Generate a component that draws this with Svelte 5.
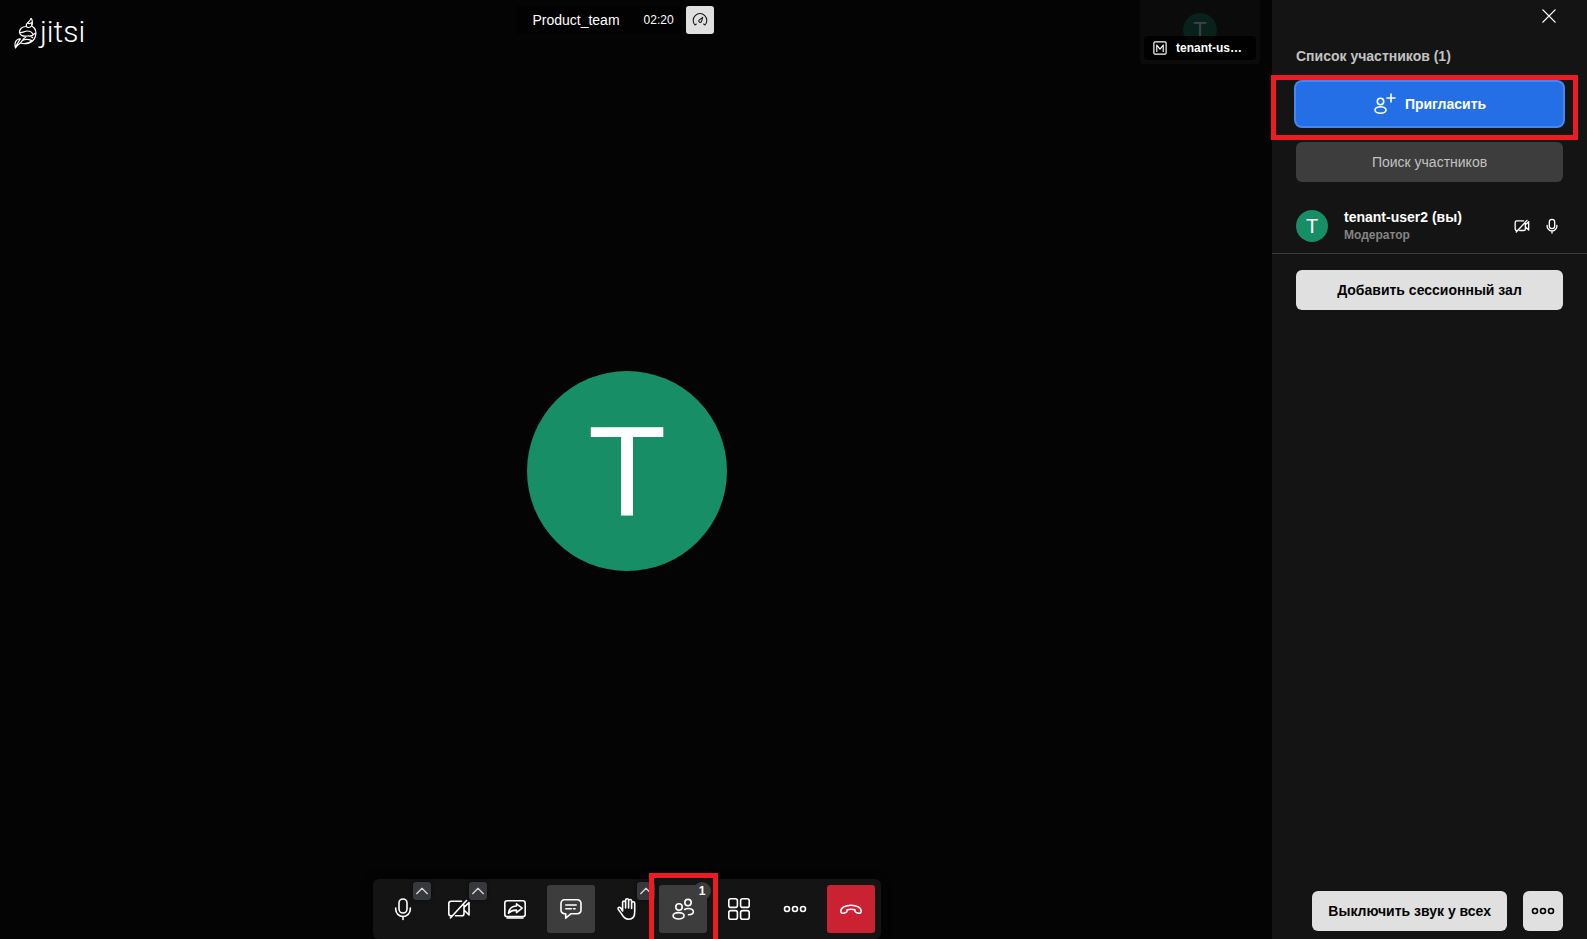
<script lang="ts">
  let search: string = '';
  let participants = [{ name: 'tenant-user2', role: 'Модератор', self: true }];

  const tools = [
    { id: 'mic', label: 'Микрофон', arrow: true },
    { id: 'camera-off', label: 'Камера', arrow: true },
    { id: 'share', label: 'Демонстрация экрана' },
    { id: 'chat', label: 'Чат', active: true },
    { id: 'hand', label: 'Поднять руку', arrow: true },
    { id: 'people', label: 'Участники', active: true, marked: true },
    { id: 'tiles', label: 'Плитка' },
    { id: 'dots', label: 'Ещё' },
    { id: 'hangup', label: 'Завершить', danger: true }
  ];
</script>

<svelte:head>
  <title>Product_team</title>
</svelte:head>

{#snippet icon(id, size = 24)}
  <svg class="icon" width={size} height={size} viewBox="0 0 24 24" aria-hidden="true">
    {#if id === 'mic'}
      <rect x="8" y="2" width="8" height="14" rx="4" />
      <path d="M4.7 11v1.2a7.3 7.3 0 0 0 14.6 0V11M12 19.5v3" />
    {:else if id === 'camera-off'}
      <path d="M14.5 4.2H4.2c-1.4 0-2.4 1-2.4 2.4v9.8c0 1.4 1 2.4 2.4 2.4h.6M19.5 3.5 3.4 21M8.5 18.8h6.2c1.4 0 2.3-1 2.3-2.4V8.2M17 13l5 5V5.5l-4 3.8" />
    {:else if id === 'share'}
      <rect x="1.8" y="3.8" width="20.4" height="15.8" rx="2.4" />
      <path d="M4 21h16" />
      <path d="M13.5 9V6.8l5.7 4.3-5.7 4.5v-2.5c-3.800-.2-5.900.9-8 3.100.5-4.200 3.400-6.900 8-7.200z" />
    {:else if id === 'chat'}
      <path d="M5.500 2.800h13a3.500 3.500 0 0 1 3.500 3.500v6.900a3.500 3.500 0 0 1-3.500 3.500H12l-5.300 4.500v-4.500H5.500A3.500 3.500 0 0 1 2 13.200V6.300a3.500 3.500 0 0 1 3.500-3.500z" />
      <path d="M6.800 8h10.400M6.800 11.700h5.500M14.500 11.700h1.600" />
    {:else if id === 'hand'}
      <path d="M7.600 14V5.500a1.500 1.500 0 0 1 3 0V11 3.200a1.500 1.500 0 0 1 3 0V11 4a1.500 1.500 0 0 1 3 0v7.500V6.300a1.500 1.500 0 0 1 3.100 0V15c0 4.500-2.200 7.200-6 7.200-3.400 0-5.200-1.900-6.800-4.800l-3.800-5.300c-.5-1.400 1.300-2.500 2.500-1.200z" />
    {:else if id === 'people'}
      <circle cx="8" cy="10" r="3.200" />
      <ellipse cx="7.600" cy="18.800" rx="5.500" ry="3.200" />
      <circle cx="17" cy="5.600" r="3.200" />
      <path d="M13.700 12.500c1-.7 2.100-1 3.400-1 3.200 0 5.300 1.600 5.300 3.300 0 1.600-1.900 2.900-4.900 3" />
    {:else if id === 'tiles'}
      <rect x="1.800" y="1.800" width="8.600" height="8.600" rx="2" />
      <rect x="13.600" y="1.800" width="8.600" height="8.600" rx="2" />
      <rect x="1.800" y="13.600" width="8.600" height="8.600" rx="2" />
      <rect x="13.600" y="13.600" width="8.600" height="8.600" rx="2" />
    {:else if id === 'dots'}
      <circle cx="4" cy="12" r="2.500" />
      <circle cx="12" cy="12" r="2.500" />
      <circle cx="20" cy="12" r="2.500" />
    {:else if id === 'hangup'}
      <path d="M6.800 15.500c.9-.3 1.300-.9 1.300-1.700v-1c2.600-.7 5.200-.7 7.800 0v1c0 .8.400 1.400 1.300 1.700l2.400.7c1.500.4 2.600-.6 2.600-2 0-3.500-4.500-6-10.200-6S1.800 10.700 1.800 14.200c0 1.400 1.100 2.400 2.600 2z" />
    {:else if id === 'gauge'}
      <path d="M4.500 19.500a10.200 10.200 0 1 1 15 0l-2-1.500M4.500 19.500l2-1.500" />
      <path d="M16 8l-1.600 6a2.200 2.200 0 0 1-4.200-1.500z" />
    {:else if id === 'invite'}
      <circle cx="7.500" cy="9.500" r="3.200" />
      <ellipse cx="7.500" cy="18" rx="5.500" ry="3.300" />
      <path d="M18 2v8M14 6h8" />
    {:else if id === 'close'}
      <path d="M1.500 1.500l21 21M22.500 1.500l-21 21" />
    {:else if id === 'up'}
      <path d="M4 16l8-8 8 8" />
    {:else if id === 'moderator'}
      <rect x="1.500" y="1.500" width="21" height="21" rx="2" />
      <path d="M6.500 18V7l5.500 7 5.500-7v11" />
    {/if}
  </svg>
{/snippet}

<div class="conference">
  <main class="video-space">
    <header class="top">
      <a class="logo" href="#home" aria-label="jitsi">
        <svg class="watermark" width="24" height="32" viewBox="0 0 24 32" aria-hidden="true">
          <path d="M17 1c-.5 3-2 3.500-3.500 5M17 1c1.500 2 1.500 5 .5 7" />
          <path d="M13.500 6c-2 1.500-1.500 4.500 1 4.500 2.800 0 4.500-2.500 3.500-5-1.500 1-3 1.500-4.500.5z" />
          <path d="M12.500 9.500c-4 0-7 2-7 6 2.500 1 5-1.500 8-1.500 2.500 0 4.500 1 5.500 3.500M18 9c3.500 2.500 4.500 6.500 3.500 10-.8 3.500-3.500 6-7.500 7.500" />
          <path d="M5.500 15.500c1 3.500 5 4 8 3.500 2.500-.4 4 .3 5.500 2M21.500 16c-2 2-3.500 3-6 3" />
          <path d="M18 23.500c-3 3-7 4-11.500 2.500 2-4 6-4.500 11.500-2.500zM8 24c1-2 2-3 4-4" />
          <path d="M6.500 21.500C2 22 0 25.500 1.500 31c1-2.500 3-3.500 5-5M6.500 21.500c-1 2-3 4-5 9" />
        </svg>
        <span>jitsi</span>
      </a>
      <div class="subject">
        <span class="room">Product_team</span>
        <span class="timer">02:20</span>
        <button class="quality" aria-label="Производительность">{@render icon('gauge', 16)}</button>
      </div>
      <div class="thumbnail">
        <div class="thumb-avatar">T</div>
        <div class="thumb-label">
          {@render icon('moderator', 14)}
          <span>tenant-us…</span>
        </div>
      </div>
    </header>

    <section class="stage">
      <div class="avatar-large">T</div>
    </section>

    <div class="toolbox">
      <div class="toolbar" role="toolbar">
        {#each tools as tool}
          <div class="tool">
            <button
              class="tool-button"
              class:active={tool.active}
              class:danger={tool.danger}
              aria-label={tool.label}
            >
              {@render icon(tool.id)}
            </button>
            {#if tool.arrow}
              <button class="arrow" aria-label="Настройки: {tool.label}">{@render icon('up', 16)}</button>
            {/if}
            {#if tool.marked}
              <span class="count">{participants.length}</span>
              <span class="mark mark-tool"></span>
            {/if}
          </div>
        {/each}
      </div>
    </div>
  </main>

  <aside class="pane">
    <div class="pane-header">
      <button class="close" aria-label="Закрыть">{@render icon('close', 14)}</button>
    </div>
    <h2>Список участников ({participants.length})</h2>
    <div class="invite-wrap">
      <button class="invite">{@render icon('invite')}Пригласить</button>
      <span class="mark mark-invite"></span>
    </div>
    <input
      class="search"
      type="text"
      placeholder="Поиск участников"
      aria-label="Поиск участников"
      bind:value={search}
    />
    {#each participants as participant}
      <div class="participant">
        <div class="avatar-small">T</div>
        <div class="info">
          <div class="name">{participant.name} {participant.self ? '(вы)' : ''}</div>
          <div class="role">{participant.role}</div>
        </div>
        <div class="states">
          {@render icon('camera-off', 16)}
          {@render icon('mic', 16)}
        </div>
      </div>
    {/each}
    <button class="secondary">Добавить сессионный зал</button>
    <footer>
      <button class="secondary">Выключить звук у всех</button>
      <button class="secondary more" aria-label="Ещё">{@render icon('dots')}</button>
    </footer>
  </aside>
</div>

<style>
  :global(body) {
    background: #040404;
  }

  .conference {
    display: flex;
    min-height: 100vh;
    color: #fff;
    font-family: 'Liberation Sans', Arial, sans-serif;
    font-size: 14px;
    line-height: 20px;
  }

  button,
  input {
    margin: 0;
    padding: 0;
    border: 0;
    font: inherit;
    color: inherit;
  }

  button {
    display: flex;
    align-items: center;
    justify-content: center;
    background: none;
    cursor: pointer;
  }

  .icon {
    display: block;
    flex-shrink: 0;
    fill: none;
    stroke: currentColor;
    stroke-width: 1.6;
    stroke-linecap: round;
    stroke-linejoin: round;
  }

  .video-space {
    flex: 1;
    display: flex;
    flex-direction: column;
    min-width: 0;
    background: #040404;
  }

  .top {
    display: grid;
    grid-template-columns: 1fr auto 1fr;
    align-items: start;
    height: 63px;
  }

  .logo {
    display: flex;
    align-items: center;
    gap: 2px;
    padding: 17px 0 0 14px;
    color: #fff;
    text-decoration: none;
    font-family: Roboto, 'Open Sans', sans-serif;
    font-size: 30px;
    font-weight: 300;
    line-height: 32px;
  }

  .logo span {
    margin-top: -2px;
  }

  .watermark {
    fill: none;
    stroke: #fff;
    stroke-width: 1.2;
    stroke-linejoin: round;
  }

  .subject {
    display: flex;
    align-items: center;
    padding: 6px 42px 0 0;
    line-height: 28px;
  }

  .room {
    padding: 0 16px;
    background: #020202;
    border-radius: 3px 0 0 3px;
  }

  .timer {
    padding: 0 8px;
    margin-right: 4px;
    background: #020202;
    border-radius: 0 3px 3px 0;
    font-size: 12px;
  }

  .quality {
    width: 28px;
    height: 28px;
    border-radius: 3px;
    background: #e0e0e0;
    color: #141414;
  }

  .thumbnail {
    justify-self: end;
    display: flex;
    flex-direction: column;
    align-items: center;
    box-sizing: border-box;
    width: 120px;
    height: 64px;
    margin-right: 12px;
    padding-top: 13px;
    border-radius: 0 0 4px 4px;
    background: #0b0b0b;
  }

  .thumb-avatar {
    width: 34px;
    height: 34px;
    border-radius: 50%;
    background: #08211a;
    color: #3c4541;
    font-size: 22px;
    line-height: 34px;
    text-align: center;
  }

  .thumb-label {
    position: relative;
    display: flex;
    align-items: center;
    gap: 9px;
    box-sizing: border-box;
    width: 112px;
    height: 24px;
    margin-top: -11px;
    padding: 0 9px;
    border-radius: 4px;
    background: rgba(0, 0, 0, 0.85);
    font-size: 12px;
    font-weight: bold;
  }

  .thumb-label .icon {
    stroke-width: 2;
  }

  .stage {
    flex: 1;
    display: flex;
    align-items: center;
    justify-content: center;
    padding-right: 18px;
  }

  .avatar-large {
    width: 200px;
    height: 200px;
    border-radius: 50%;
    background: #178e66;
    font-size: 128px;
    line-height: 200px;
    text-align: center;
  }

  .toolbox {
    display: flex;
    justify-content: center;
    padding-right: 18px;
  }

  .toolbar {
    display: flex;
    gap: 8px;
    padding: 6px;
    border-radius: 6px;
    background: #141414;
    box-shadow: 0 2px 8px 4px rgba(0, 0, 0, 0.3);
  }

  .tool {
    position: relative;
  }

  .tool-button {
    width: 48px;
    height: 48px;
    border-radius: 3px;
  }

  .active {
    background: #3d3d3d;
  }

  .danger {
    background: #cb2233;
  }

  .arrow {
    position: absolute;
    top: -3px;
    right: -4px;
    width: 18px;
    height: 18px;
    border-radius: 3px;
    background: #36383c;
    color: #d5d5d6;
    box-shadow: 0 0 4px rgba(0, 0, 0, 0.6);
  }

  .arrow .icon {
    stroke-width: 2;
  }

  .count {
    position: absolute;
    top: -3px;
    right: -4px;
    width: 18px;
    height: 18px;
    border-radius: 50%;
    background: #3d3d3d;
    font-size: 12px;
    font-weight: bold;
    line-height: 18px;
    text-align: center;
  }

  .mark {
    position: absolute;
    border: 5px solid #ed1c24;
    pointer-events: none;
  }

  .mark-tool {
    inset: -12px -11px -6px -10px;
    border-bottom: 0;
  }

  .pane {
    display: flex;
    flex-direction: column;
    box-sizing: border-box;
    width: 315px;
    padding: 0 24px 8px;
    background: #141414;
  }

  .pane-header {
    display: flex;
    justify-content: flex-end;
  }

  .close {
    width: 28px;
    height: 32px;
  }

  .close .icon {
    stroke-width: 2.4;
  }

  h2 {
    margin: 14px 0 16px;
    color: #c2c2c2;
    font-size: 14px;
    line-height: 20px;
  }

  .invite-wrap {
    position: relative;
  }

  .invite {
    gap: 8px;
    width: 100%;
    height: 44px;
    border-radius: 6px;
    background: #246fe5;
    box-shadow: 0 0 0 2px #4687ed;
    font-weight: bold;
  }

  .mark-invite {
    inset: -7px -15px -14px -25px;
  }

  .search {
    height: 40px;
    margin-top: 16px;
    border-radius: 6px;
    background: #3d3d3d;
    text-align: center;
  }

  .search::placeholder {
    color: #c2c2c2;
    opacity: 1;
  }

  .participant {
    display: flex;
    align-items: center;
    height: 55px;
    margin: 16px -24px;
    padding: 0 27px 0 24px;
    border-bottom: 1px solid #3d3d3d;
  }

  .avatar-small {
    width: 32px;
    height: 32px;
    border-radius: 50%;
    background: #178e66;
    font-size: 20px;
    line-height: 32px;
    text-align: center;
  }

  .info {
    flex: 1;
    margin-left: 16px;
    font-weight: bold;
    line-height: 18px;
  }

  .role {
    color: #858585;
    font-size: 12px;
  }

  .states {
    display: flex;
    gap: 14px;
  }

  .states .icon {
    stroke-width: 2;
  }

  .secondary {
    height: 40px;
    padding: 0 16px;
    border-radius: 6px;
    background: #e0e0e0;
    color: #040404;
    font-weight: bold;
  }

  footer {
    display: flex;
    justify-content: flex-end;
    gap: 16px;
    margin-top: auto;
  }

  .more {
    width: 40px;
    padding: 0;
  }
</style>
